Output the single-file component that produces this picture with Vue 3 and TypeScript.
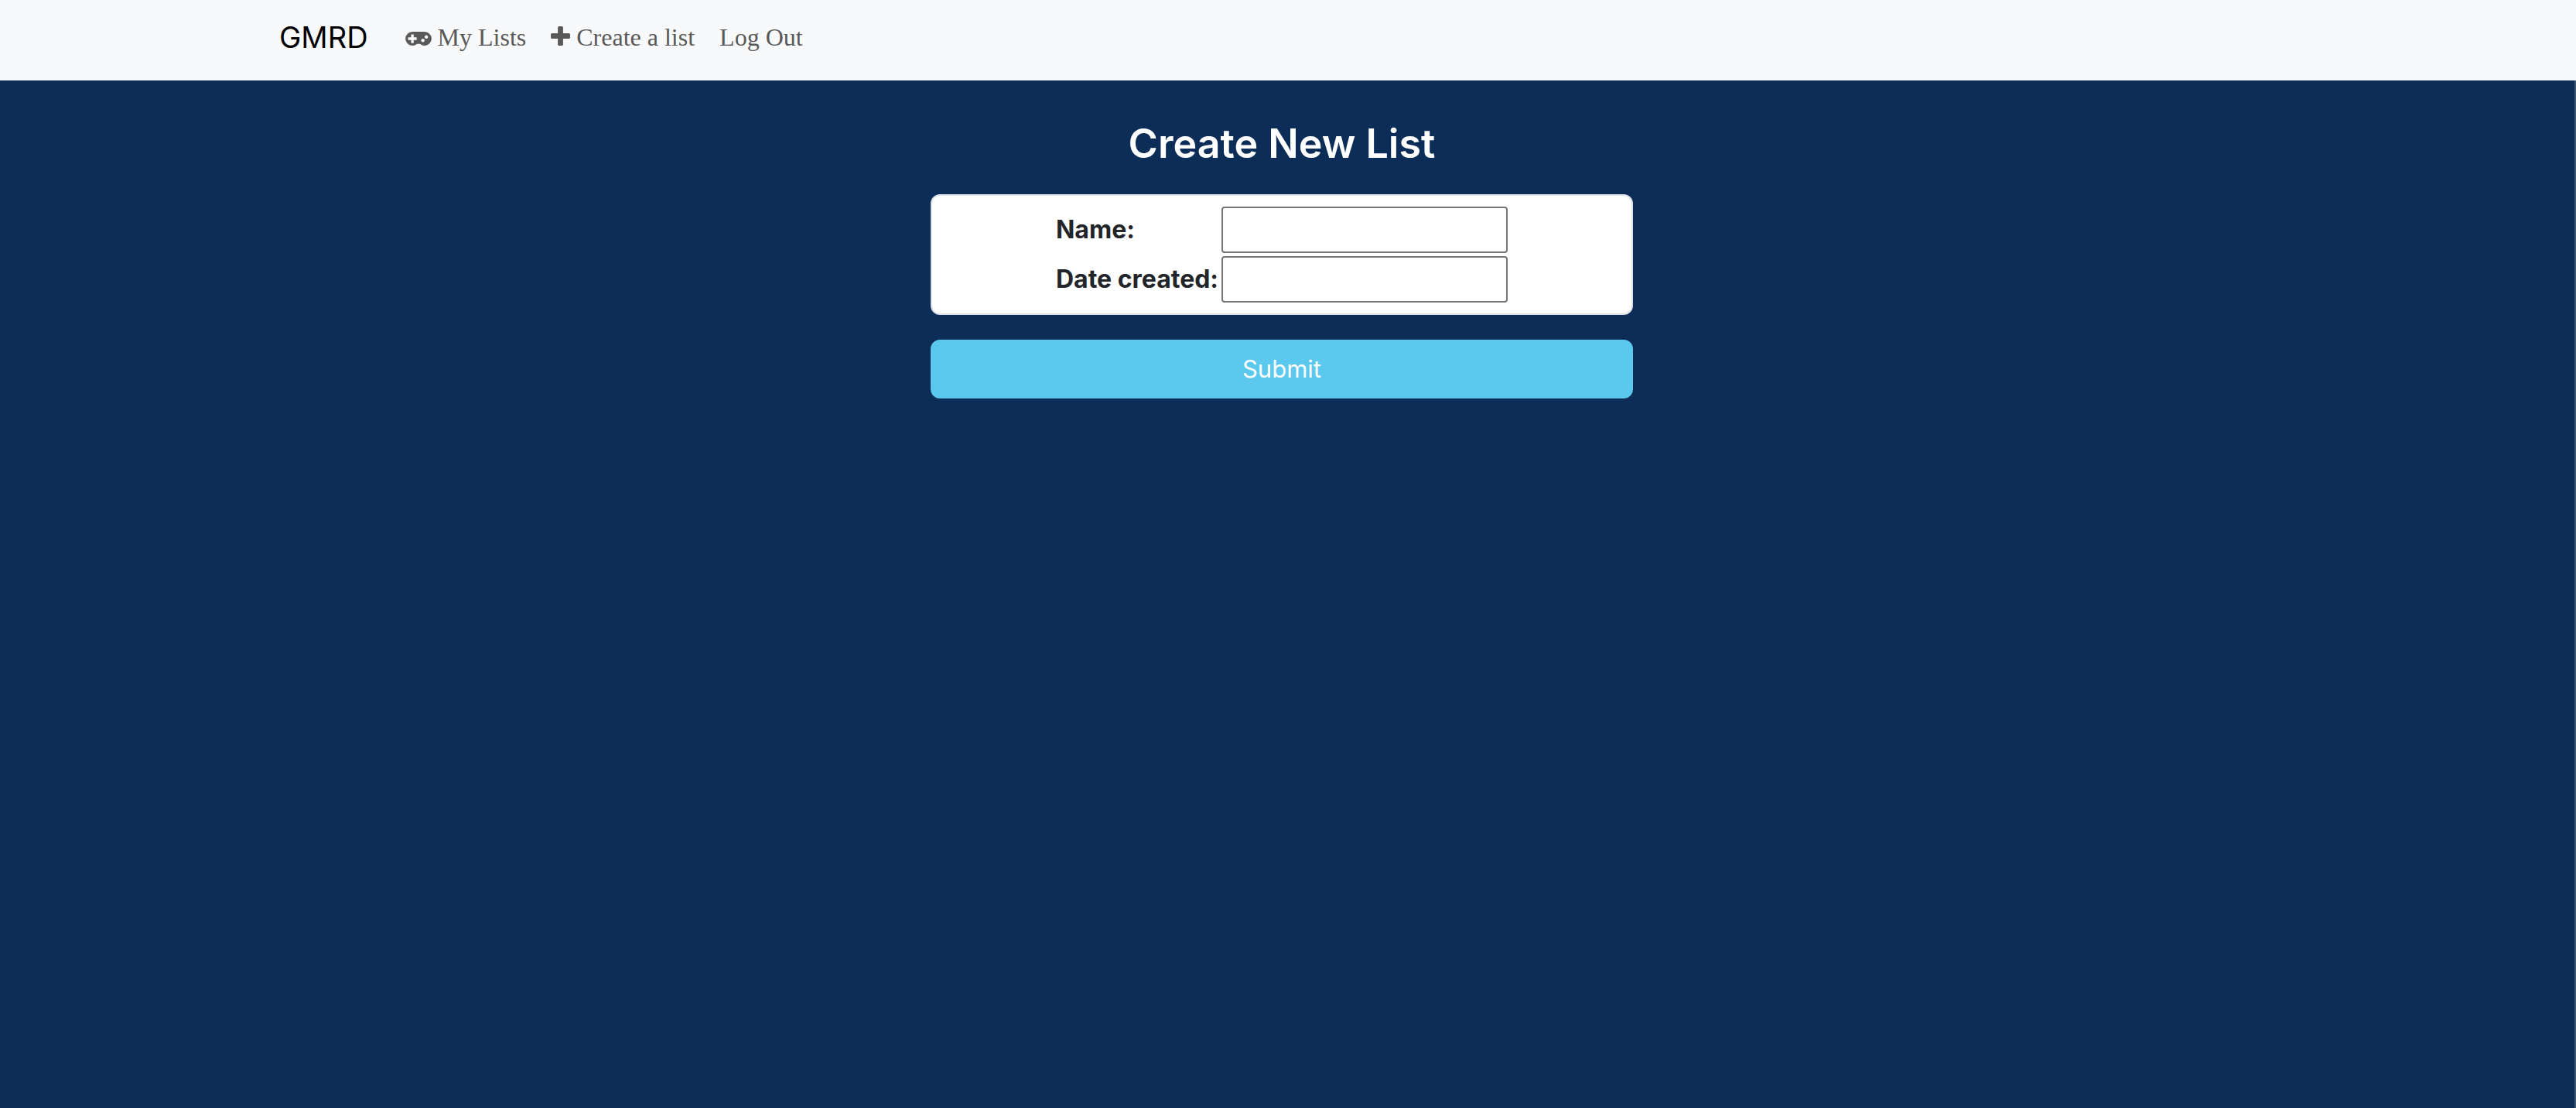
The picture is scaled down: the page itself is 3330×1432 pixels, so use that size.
<script setup lang="ts">
import { reactive } from 'vue'

interface Field {
  key: 'name' | 'created'
  label: string
}

const fields: Field[] = [
  { key: 'name', label: 'Name:' },
  { key: 'created', label: 'Date created:' },
]

const form = reactive<Record<Field['key'], string>>({ name: '', created: '' })
</script>

<template>
  <div class="page">
    <nav class="navbar">
      <div class="container">
        <a class="brand" href="#">GMRD</a>
        <a class="nav-link" href="#"><svg class="pad" viewBox="0 512 1920 1024" aria-hidden="true"><path d="M832 1088v-128q0-14-9-23t-23-9h-192v-192q0-14-9-23t-23-9h-128q-14 0-23 9t-9 23v192h-192q-14 0-23 9t-9 23v128q0 14 9 23t23 9h192v192q0 14 9 23t23 9h128q14 0 23-9t9-23v-192h192q14 0 23-9t9-23zm576 64q0-53-37.5-90.5t-90.5-37.5-90.5 37.5-37.5 90.5 37.5 90.5 90.5 37.5 90.5-37.5 37.5-90.5zm256-256q0-53-37.5-90.5t-90.5-37.5-90.5 37.5-37.5 90.5 37.5 90.5 90.5 37.5 90.5-37.5 37.5-90.5zm256 128q0 212-150 362t-362 150q-192 0-338-128h-220q-146 128-338 128-212 0-362-150t-150-362 150-362 362-150h896q212 0 362 150t150 362z" /></svg> My Lists</a>
        <a class="nav-link" href="#"><svg class="plus" viewBox="0 192 1408 1408" aria-hidden="true"><path d="M1408 800v192q0 40-28 68t-68 28h-416v416q0 40-28 68t-68 28h-192q-40 0-68-28t-28-68v-416h-416q-40 0-68-28t-28-68v-192q0-40 28-68t68-28h416v-416q0-40 28-68t68-28h192q40 0 68 28t28 68v416h416q40 0 68 28t28 68z" /></svg> Create a list</a>
        <a class="nav-link" href="#">Log Out</a>
      </div>
    </nav>

    <main class="content">
      <form class="list-form" @submit.prevent>
        <h1>Create New List</h1>
        <div class="card">
          <table>
            <tbody>
              <tr v-for="field in fields" :key="field.key">
                <th scope="row"><label :for="field.key">{{ field.label }}</label></th>
                <td><input :id="field.key" v-model="form[field.key]" type="text" /></td>
              </tr>
            </tbody>
          </table>
        </div>
        <button type="submit">Submit</button>
      </form>
    </main>
  </div>
</template>

<style>
body {
  margin: 0;
  background: #0c2d57;
}
</style>

<style scoped>
* {
  box-sizing: border-box;
}

.page {
  display: flex;
  flex-direction: column;
  min-height: 100vh;
  font-family: Inter, "Liberation Sans", sans-serif;
  color: #212529;
}

.navbar {
  padding: 0 16px 8px 0;
  background: #f8f9fb;
}

.container {
  display: flex;
  align-items: center;
  max-width: 2640px;
  margin: 0 auto;
  padding: 18px 24px;
}

.brand {
  margin-right: 32px;
  font-size: 38px;
  line-height: 60px;
  color: #000;
  text-decoration: none;
}

.nav-link {
  padding: 0 16px;
  font-family: "Liberation Serif", serif;
  font-size: 32px;
  line-height: 48px;
  color: #595959;
  text-decoration: none;
  white-space: nowrap;
}

.nav-link svg {
  fill: currentColor;
  vertical-align: baseline;
}

.pad {
  width: 34px;
  height: 18px;
}

.plus {
  width: 25px;
  height: 25px;
}

.content {
  flex: 1;
  padding: 48px 14px 48px 0;
  border-right: 2px solid #3e5775;
}

.list-form {
  display: flex;
  flex-direction: column;
  gap: 32px;
  max-width: 908px;
  margin: 0 auto;
}

h1 {
  margin: 0;
  font-size: 52px;
  font-weight: 600;
  line-height: 67px;
  text-align: center;
  color: #fff;
}

.card {
  padding: 12px;
  background: #fff;
  border: 2px solid #dee2e6;
  border-radius: 12px;
}

table {
  margin: 0 auto;
  border-collapse: collapse;
}

th,
td {
  padding: 2px;
}

th {
  width: 214px;
  font-size: 32px;
  font-weight: 700;
  line-height: 48px;
  text-align: left;
  white-space: nowrap;
}

input {
  display: block;
  width: 370px;
  height: 60px;
  padding: 2px 4px;
  font: inherit;
  font-size: 32px;
  background: #fff;
  border: 2px solid #767676;
  border-radius: 4px;
}

button {
  height: 76px;
  padding: 12px 24px;
  font: inherit;
  font-size: 31px;
  line-height: 48px;
  color: #fff;
  background: #5bc8ee;
  border: 2px solid #5bc8ee;
  border-radius: 12px;
}
</style>
